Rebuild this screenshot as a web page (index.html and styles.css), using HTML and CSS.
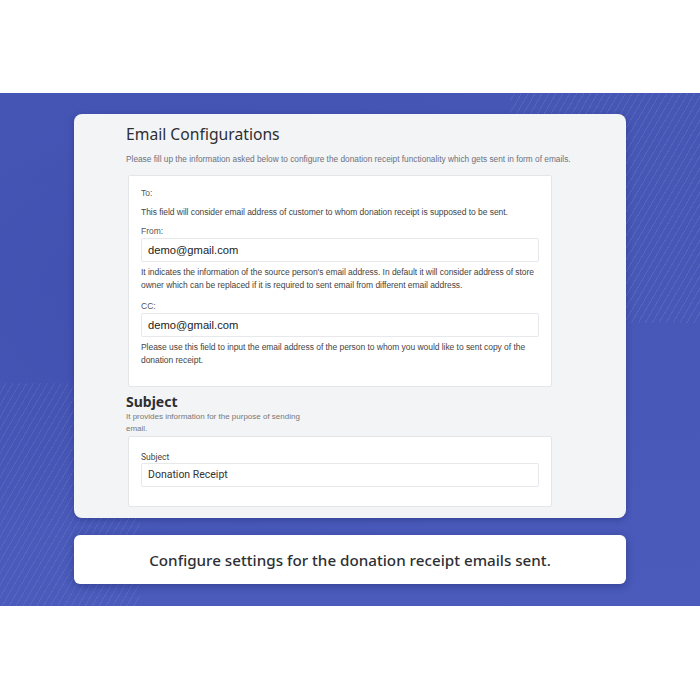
FILE: index.html
```html
<!DOCTYPE html>
<html>
<head>
<meta charset="utf-8">
<link rel="stylesheet" href="styles.css">
</head>
<body>
<div class="top"></div>
<div class="band">
  <div class="panel">
    <h1 class="title">Email Configurations</h1>
    <p class="intro">Please fill up the information asked below to configure the donation receipt functionality which gets sent in form of emails.</p>
    <div class="card">
      <div class="label">To:</div>
      <p class="desc single">This field will consider email address of customer to whom donation receipt is supposed to be sent.</p>
      <div class="label">From:</div>
      <div class="input">demo@gmail.com</div>
      <p class="desc">It indicates the information of the source person's email address. In default it will consider address of store owner which can be replaced if it is required to sent email from different email address.</p>
      <div class="label">CC:</div>
      <div class="input">demo@gmail.com</div>
      <p class="desc last">Please use this field to input the email address of the person to whom you would like to sent copy of the donation receipt.</p>
    </div>
    <h2 class="subhead">Subject</h2>
    <p class="subdesc">It provides information for the purpose of sending email.</p>
    <div class="card card2">
      <div class="label2">Subject</div>
      <div class="input input2">Donation Receipt</div>
    </div>
  </div>
  <div class="caption">Configure settings for the donation receipt emails sent.</div>
</div>
<div class="bottom"></div>
</body>
</html>
```
FILE: styles.css
```css
* { box-sizing: border-box; }
body { margin: 0; font-family: "Liberation Sans", Arial, sans-serif; background: #fff; }
.top { height: 93px; background: #fff; }
.bottom { height: 94px; background: #fff; }
.band {
  height: 513px;
  padding: 21px 74px 0;
  display: flex;
  flex-direction: column;
  gap: 17px;
  background:
    repeating-linear-gradient(-60deg, rgba(255,255,255,0) 0 5px, rgba(255,255,255,0.08) 5px 6px) right top / 190px 230px no-repeat,
    repeating-linear-gradient(-60deg, rgba(255,255,255,0) 0 5px, rgba(255,255,255,0.07) 5px 6px) left 290px / 140px 223px no-repeat,
    radial-gradient(ellipse at 30% 40%, #3f4fae 0%, rgba(63,79,174,0) 60%),
    linear-gradient(180deg, #4656b5 0%, #4858b8 60%, #4a5bbb 100%);
}
.panel {
  height: 404px;
  background: #f3f4f6;
  border-radius: 8px;
  padding: 9px 30px 0 52px;
  overflow: hidden;
  box-shadow: 0 2px 6px rgba(20,30,90,0.35);
}
.title {
  margin: 0;
  font-family: "Noto Sans", "DejaVu Sans", sans-serif;
  font-weight: 400;
  font-size: 15.7px;
  line-height: 22px;
  color: #2d2f33;
}
.intro {
  margin: 8px 0 0;
  font-size: 8.3px;
  line-height: 12px;
  color: #6c7280;
  white-space: nowrap;
}
.card {
  margin: 10px 0 0 2px;
  width: 424px;
  background: #fff;
  border: 1px solid #e3e5e8;
  border-radius: 2px;
  padding: 11px 12px 18px;
}
.label { font-size: 8.5px; line-height: 12px; color: #555; }
.desc { margin: 4px 0 7px; font-size: 8.5px; line-height: 13.5px; color: #444; letter-spacing: -0.05px; }
.desc.single { margin: 7px 0 5px; }
.desc.last { margin-bottom: 0; }
.input {
  margin-top: 1px;
  height: 24px;
  border: 1px solid #e6e8eb;
  border-radius: 2px;
  padding: 0 6px;
  font-size: 11.2px;
  line-height: 22px;
  color: #222;
}
.subhead {
  margin: 6px 0 0;
  font-family: "Noto Sans", "DejaVu Sans", sans-serif;
  font-weight: 700;
  font-size: 14px;
  line-height: 18px;
  color: #2d2f33;
}
.subdesc {
  margin: 0;
  width: 180px;
  font-size: 8px;
  line-height: 12px;
  color: #777;
}
.card2 { margin-top: 1px; padding: 14px 12px 19px; }
.label2 { font-family: "Roboto", sans-serif; font-size: 8.5px; line-height: 12px; color: #444; }
.input2 { margin-top: 0; font-family: "Roboto", sans-serif; font-size: 10.5px; color: #333; }
.caption {
  height: 49px;
  background: #fff;
  border-radius: 6px;
  box-shadow: 0 2px 8px rgba(20,30,90,0.4);
  display: flex;
  align-items: center;
  justify-content: center;
  font-family: "Noto Sans", sans-serif;
  font-weight: 500;
  font-size: 15.2px;
  color: #2d2f33;
}
```
